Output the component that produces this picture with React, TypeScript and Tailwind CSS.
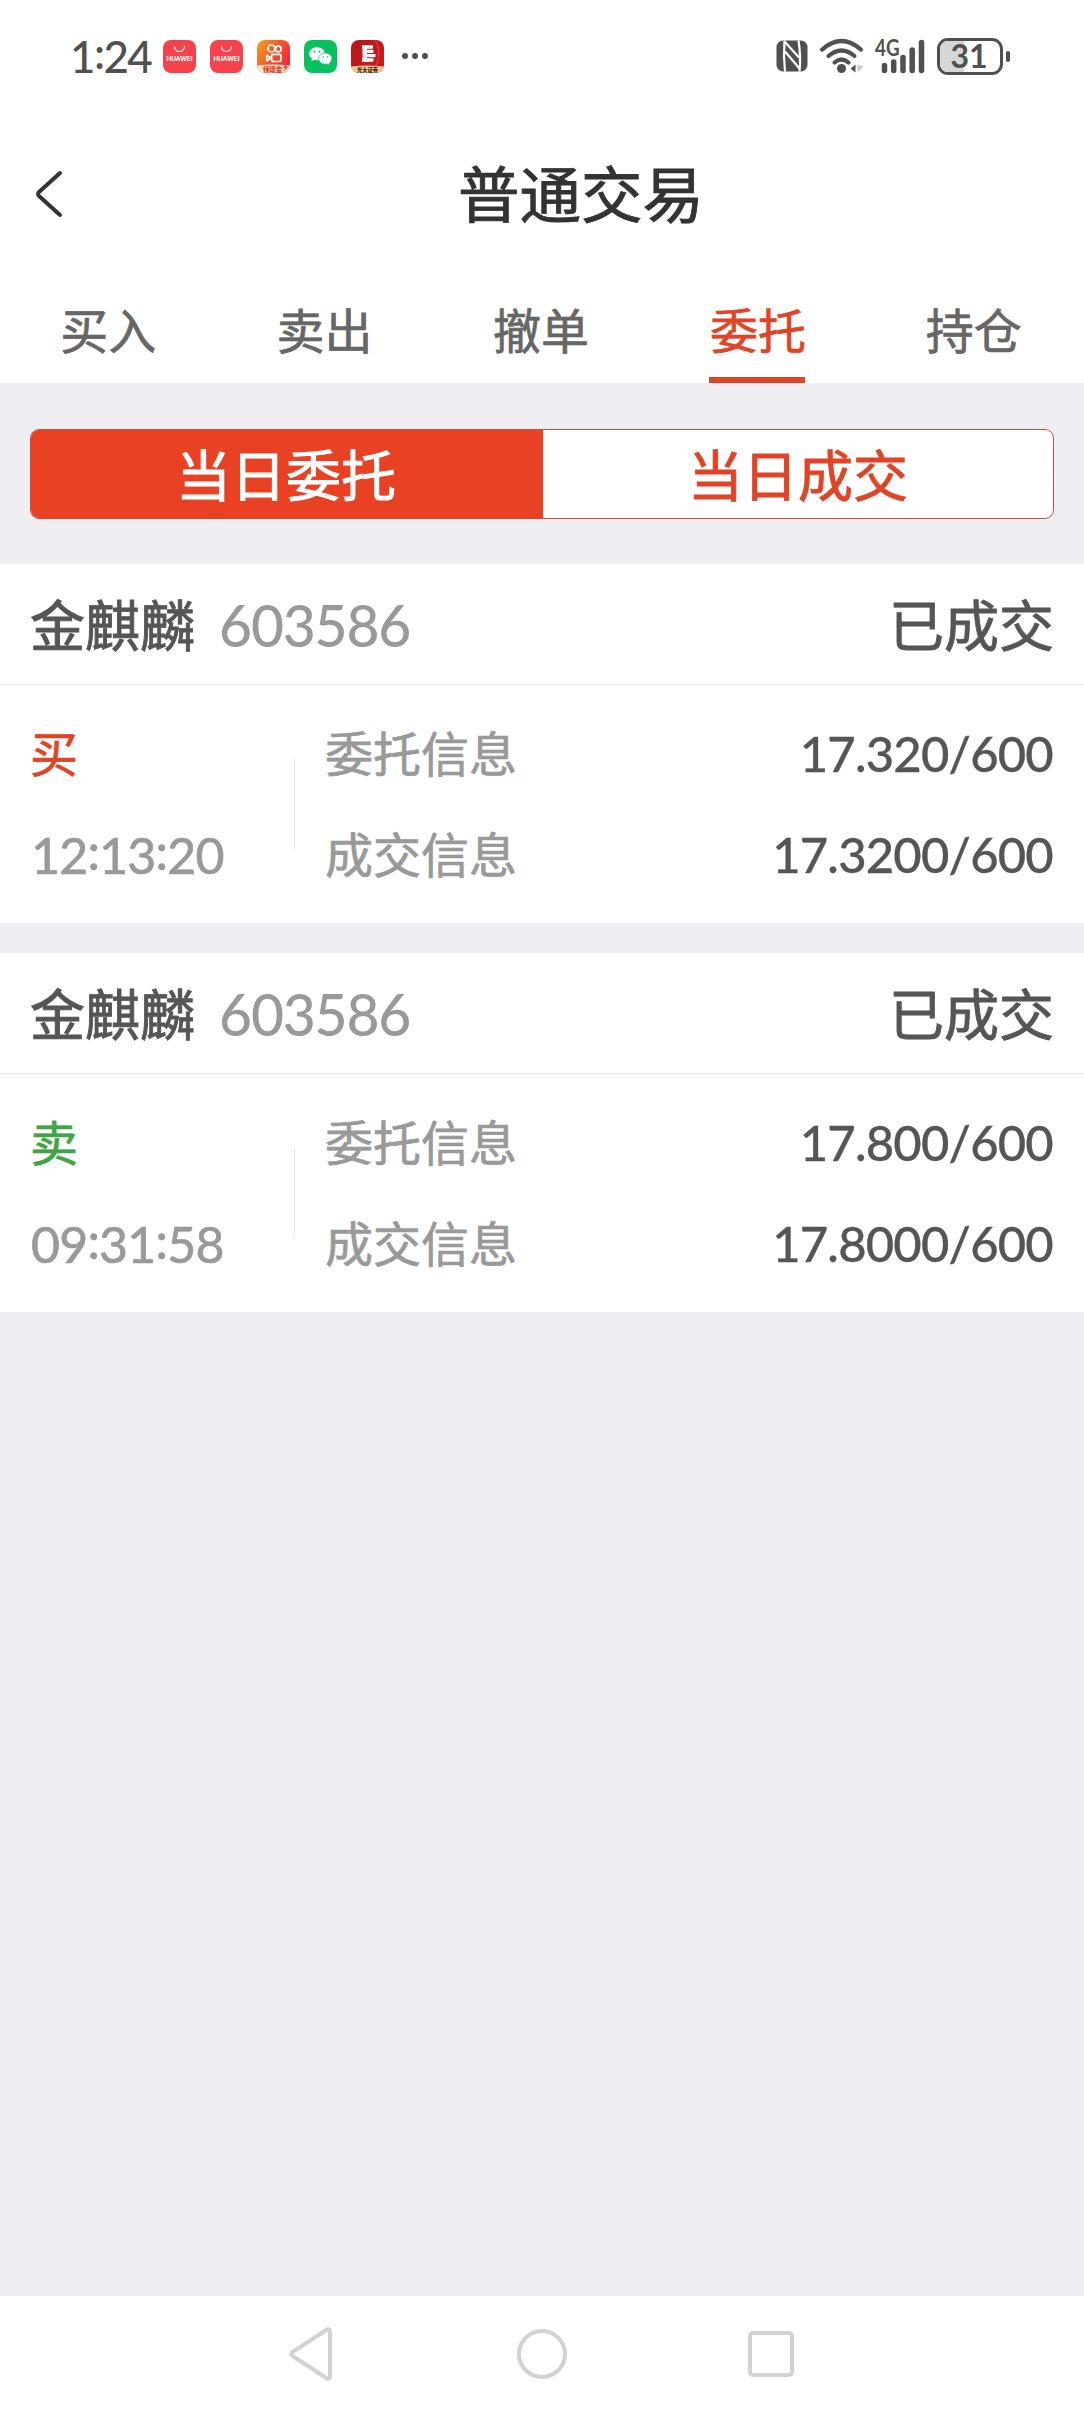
import React from "react";

const CJK = "font-['Lato','Noto_Sans_CJK_SC',sans-serif]";

function HuaweiIcon() {
  return (
    <svg className="h-[33px] w-[33px]" viewBox="0 0 33 33">
      <rect width="33" height="33" rx="8" fill="#f4434c" />
      <path d="M11.5 6.5a5 5 0 0 0 10 0" fill="none" stroke="#fff" strokeWidth="1.1" strokeLinecap="round" />
      <text x="16.5" y="21.3" textAnchor="middle" textLength="26" lengthAdjust="spacingAndGlyphs" fontSize="5.8" fontWeight="700" fill="#fff" fontFamily="Inter, sans-serif">HUAWEI</text>
    </svg>
  );
}

function KuaishouIcon() {
  return (
    <svg className="h-[33px] w-[33px]" viewBox="0 0 33 33">
      <defs>
        <linearGradient id="ks" x1="0" y1="0" x2="1" y2="0.6">
          <stop offset="0" stopColor="#f7a325" />
          <stop offset="0.55" stopColor="#f4572b" />
          <stop offset="1" stopColor="#f02a3c" />
        </linearGradient>
        <clipPath id="ksc"><rect width="33" height="33" rx="8" /></clipPath>
      </defs>
      <g clipPath="url(#ksc)">
        <rect width="33" height="33" fill="url(#ks)" />
        <path d="M0 25.500Q16 23.500 33 25.500V33H0Z" fill="#fbe3c0" />
        <g fill="none" stroke="#fff" strokeWidth="1.700">
          <circle cx="14.500" cy="8.500" r="3.500" />
          <circle cx="21.300" cy="9" r="2.900" />
          <rect x="14.600" y="14.300" width="9.400" height="7.200" rx="2" />
          <path d="M9.800 15.300v5.400l4.300-2.700z" strokeLinejoin="round" />
        </g>
        <text x="15.500" y="31.500" textAnchor="middle" fontSize="6.500" fontWeight="900" fill="#e0362a" fontFamily="Noto Sans CJK SC, sans-serif">领现金</text>
        <path d="M30 23l-4 5h2.500l-2 4 5-5.500h-2.500z" fill="#f0402c" />
      </g>
    </svg>
  );
}

function WechatIcon() {
  return (
    <svg className="h-[33px] w-[33px]" viewBox="0 0 33 33">
      <rect width="33" height="33" rx="8" fill="#07c160" />
      <path d="M13 7.300c-4.400 0-7.800 2.900-7.800 6.500 0 2 1.100 3.800 2.900 5l-.8 2.500 2.900-1.500c.9.300 1.800.400 2.800.400 4.400 0 7.800-2.800 7.800-6.400S17.400 7.300 13 7.300z" fill="#fff" />
      <path d="M21.300 13c-3.700 0-6.600 2.500-6.600 5.600s2.900 5.600 6.600 5.600c.8 0 1.500-.1 2.200-.3l2.500 1.300-.7-2.100c1.600-1 2.600-2.600 2.600-4.500 0-3.100-2.900-5.600-6.600-5.600z" fill="#fff" stroke="#07c160" strokeWidth="0.700" />
      <g fill="#07c160"><circle cx="10.500" cy="11.800" r="1" /><circle cx="15.500" cy="11.800" r="1" /><circle cx="19.200" cy="17" r="0.800" /><circle cx="23.500" cy="17" r="0.800" /></g>
    </svg>
  );
}

function BrokerIcon() {
  return (
    <svg className="h-[33px] w-[33px]" viewBox="0 0 33 33">
      <defs>
        <linearGradient id="eb" x1="0" y1="0" x2="1" y2="1"><stop offset="0" stopColor="#b5161c" /><stop offset="1" stopColor="#cf1c1e" /></linearGradient>
        <clipPath id="ebc"><rect width="33" height="33" rx="8" /></clipPath>
      </defs>
      <g clipPath="url(#ebc)">
        <rect width="33" height="33" fill="url(#eb)" />
        <path d="M24 0Q31 10 25 26" stroke="#e0605c" strokeWidth="0.700" fill="none" />
        <path d="M0 26.500Q16 24.500 33 26.500V33H0Z" fill="#efc995" />
        <g fill="#fff">
          <rect x="11.500" y="5.500" width="4.500" height="16" />
          <rect x="11" y="5.200" width="11" height="3.600" rx="0.800" />
          <rect x="13" y="9.700" width="9.500" height="3.400" rx="0.800" />
          <rect x="13" y="14" width="11.500" height="3.200" rx="0.800" />
          <rect x="11" y="18.200" width="11.500" height="3.600" rx="0.800" />
        </g>
        <text x="16.500" y="31.500" textAnchor="middle" fontSize="5.200" fontWeight="900" fill="#4a1d10" fontFamily="Noto Sans CJK SC, sans-serif">光大证券</text>
      </g>
    </svg>
  );
}

function NfcIcon() {
  return (
    <svg className="h-8 w-8" viewBox="0 0 32 32">
      <rect x="0.500" y="0.500" width="31" height="31" rx="6.500" fill="#505050" />
      <path d="M8.500 0.500Q7.300 16 9 31.500M22.500 0.500Q25 16 23.500 31.500" fill="none" stroke="#fff" strokeWidth="2.200" />
      <path d="M8.500 1.500L23 17.500M9 11.500L23.500 28.500" stroke="#fff" strokeWidth="2.200" />
    </svg>
  );
}

function WifiIcon() {
  return (
    <svg className="h-9 w-[46px]" viewBox="0 0 46 36">
      <g fill="none" stroke="#505050" strokeWidth="4.200" strokeLinecap="round">
        <path d="M3.200 11.500Q22.500-5.500 41.800 11.500" />
        <path d="M9.500 18Q22.500 7 35.500 18" />
        <path d="M15.500 24.500Q22.500 18.500 29.500 24.500" />
      </g>
      <circle cx="22.500" cy="30.500" r="4.500" fill="#505050" />
      <path d="M36.500 26.500v8l-5-4z" fill="#505050" />
      <path d="M38.500 26.500v8l6-6z" fill="#c8c8c8" />
    </svg>
  );
}

function SignalIcon() {
  return (
    <svg className="h-9 w-[54px] overflow-visible" viewBox="0 0 54 36">
      <text x="1" y="18" fontSize="22" fontWeight="700" fill="#505050" fontFamily="Lato, sans-serif" textLength="24.500" lengthAdjust="spacingAndGlyphs">4G</text>
      <g stroke="#505050" strokeWidth="5.500" strokeLinecap="round">
        <path d="M10.500 27.500v5M19.700 24v8.500M29 19.500v13M38.200 12v20.500M47.500 4.500v28" />
      </g>
    </svg>
  );
}

function StatusBar() {
  return (
    <div className="flex h-[112px] items-center pl-[70px] pr-[74px] text-[#505050]">
      <div className="w-[93px] text-[44px] font-medium leading-none tracking-[-1.600px]">
        1<span className="relative -top-1">:</span>24
      </div>
      <div className="flex gap-[14px]">
        <HuaweiIcon />
        <HuaweiIcon />
        <KuaishouIcon />
        <WechatIcon />
        <BrokerIcon />
      </div>
      <div className="ml-[18px] flex gap-[4px]">
        <i className="h-[6px] w-[6px] rounded-full bg-[#505050]" />
        <i className="h-[6px] w-[6px] rounded-full bg-[#505050]" />
        <i className="h-[6px] w-[6px] rounded-full bg-[#505050]" />
      </div>
      <div className="ml-auto flex items-center">
        <NfcIcon />
        <div className="ml-[11px]"><WifiIcon /></div>
        <div className="ml-[9px]"><SignalIcon /></div>
        <div className="relative ml-[9px] flex h-[37px] w-[66px] items-center justify-center overflow-hidden rounded-[11px] border-[3px] border-[#505050]">
          <div className="absolute inset-y-0 left-0 w-6 bg-[#d6d6d6]" />
          <span className="relative right-px text-[32px] font-bold leading-none">31</span>
        </div>
        <div className="ml-[3px] h-[11px] w-[4px] rounded-full bg-[#505050]" />
      </div>
    </div>
  );
}

const tabs = ["买入", "卖出", "撤单", "委托", "持仓"];

function Clock({ value }: { value: string }) {
  return (
    <span className="tracking-[-0.800px]">
      {value.split(":").map((part, i) => (
        <React.Fragment key={i}>
          {i > 0 && <span className="relative -top-1">:</span>}
          {part}
        </React.Fragment>
      ))}
    </span>
  );
}

type Order = { side: string; sell?: boolean; time: string; entrust: string; deal: string };

function OrderCard({ order }: { order: Order }) {
  return (
    <section className="flex h-[359px] flex-col bg-white">
      <div className="flex h-[121px] items-center border-b border-[#e8e8e8] px-[30px] pt-[2px] text-[55px] leading-none">
        <span className="text-[#555] [-webkit-text-stroke:0.9px]">金麒麟</span>
        <span className="ml-[24px] text-[57px] font-medium tracking-[-1.200px] text-[#999]">603586</span>
        <span className="ml-auto text-[#555] [-webkit-text-stroke:0.9px]">已成交</span>
      </div>
      <div className="flex flex-1 items-center px-[30px] text-[48px] leading-none [-webkit-text-stroke:0.7px]">
        <div className="flex w-[264px] flex-col gap-[53px]">
          <span className={order.sell ? "text-[#3fa647]" : "text-[#e04427]"}>{order.side}</span>
          <span className="pl-px text-[50px] leading-[48px] text-[#999]"><Clock value={order.time} /></span>
        </div>
        <div className="h-[90px] w-px bg-[#e8e8e8]" />
        <div className="ml-[30px] flex flex-col gap-[53px] text-[#999]">
          <span>委托信息</span>
          <span>成交信息</span>
        </div>
        <div className="mb-px ml-auto mr-px flex flex-col items-end gap-[53px] text-[49px] font-medium leading-[48px] tracking-[-0.800px] text-[#555] [-webkit-text-stroke:0.3px] [font-kerning:none]">
          <span>{order.entrust}</span>
          <span>{order.deal}</span>
        </div>
      </div>
    </section>
  );
}

const orders: Order[] = [
  { side: "买", time: "12:13:20", entrust: "17.320/600", deal: "17.3200/600" },
  { side: "卖", sell: true, time: "09:31:58", entrust: "17.800/600", deal: "17.8000/600" },
];

export default function App() {
  return (
    <div className={`flex h-[2412px] w-[1084px] flex-col bg-[#efeef3] ${CJK}`}>
      <header className="h-[383px] bg-white">
        <StatusBar />
        <div className="flex h-[166px] items-center">
          <svg className="mb-[2px] ml-[35px] h-[48px] w-[28px]" viewBox="0 0 28 48" fill="none" stroke="#333" strokeWidth="4" strokeLinecap="round" strokeLinejoin="round">
            <path d="M25 3L4 22Q2 24 4 26L25 45" />
          </svg>
          <h1 className="ml-[395px] text-[61.500px] leading-none text-[#333] [-webkit-text-stroke:0.9px]">普通交易</h1>
        </div>
        <nav className="mr-[2px] grid h-[105px] grid-cols-5 justify-items-center text-[48px] leading-none text-[#666] [-webkit-text-stroke:0.7px]">
          {tabs.map((t) => (
            <div
              key={t}
              className={
                t === "委托"
                  ? "flex h-full w-[96px] justify-center whitespace-nowrap border-b-[6px] border-[#e04427] pl-px pt-[29px] text-[#e04427]"
                  : "pt-[29px]"
              }
            >
              {t}
            </div>
          ))}
        </nav>
      </header>
      <div className="mx-[30px] my-[45px] mt-[46px] flex h-[90px] shrink-0 overflow-hidden rounded-[9px] border border-[#c94f3d] bg-white text-[55px] leading-none [-webkit-text-stroke:0.9px]">
        <div className="flex w-[512px] items-center justify-center bg-[#e84124] pr-[2px] pt-[2px] text-white">当日委托</div>
        <div className="flex flex-1 items-center justify-center pt-[2px] text-[#e04427]">当日成交</div>
      </div>
      <main className="flex flex-1 flex-col gap-[30px]">
        {orders.map((o) => (
          <OrderCard key={o.time} order={o} />
        ))}
      </main>
      <footer className="flex h-[116px] items-center bg-white">
        <svg className="ml-[288px] h-[58px] w-[46px]" viewBox="0 0 46 58" fill="none" stroke="#d2d2d2" strokeWidth="4" strokeLinejoin="round">
          <path d="M39 4.500Q42 3.500 42 7V51Q42 54.500 39 53.500L4.500 31Q2 29 4.500 27Z" />
        </svg>
        <div className="ml-[183px] h-[50px] w-[50px] rounded-full border-[4px] border-[#d2d2d2]" />
        <div className="ml-[181px] h-[46px] w-[46px] rounded-[5px] border-[4px] border-[#d2d2d2]" />
      </footer>
    </div>
  );
}
